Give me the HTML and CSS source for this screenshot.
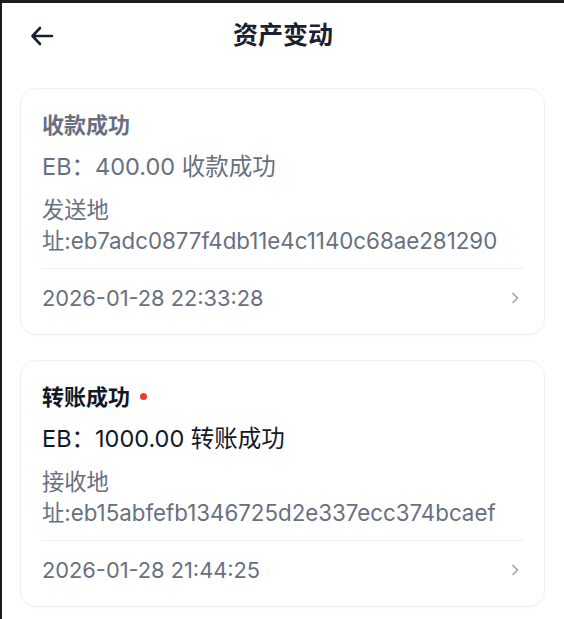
FILE: index.html
```html
<!DOCTYPE html>
<html lang="zh-CN">
<head>
<meta charset="utf-8">
<title>资产变动</title>
<link rel="stylesheet" href="styles.css">
</head>
<body>
<div class="screen">
  <header class="topbar">
    <button class="back" aria-label="返回">
      <svg width="24" height="20" viewBox="0 0 24 20" fill="none" stroke="#1a2030" stroke-width="2.6" stroke-linecap="round" stroke-linejoin="round"><path d="M22 10H3M10 2L2.5 10L10 18"/></svg>
    </button>
    <h1 class="title">资产变动</h1>
  </header>

  <main class="list">
    <article class="card read">
      <div class="card-title">收款成功</div>
      <div class="amount">EB：400.00 收款成功</div>
      <div class="address">发送地址:eb7adc0877f4db11e4c1140c68ae281290</div>
      <div class="divider"></div>
      <div class="foot">
        <span class="date">2026-01-28 22:33:28</span>
        <svg class="chev" width="8" height="12" viewBox="0 0 8 12" fill="none" stroke="#9ca3af" stroke-width="1.6" stroke-linecap="round" stroke-linejoin="round"><path d="M2 1.5L6.5 6L2 10.5"/></svg>
      </div>
    </article>

    <article class="card unread">
      <div class="card-title">转账成功<span class="dot"></span></div>
      <div class="amount">EB：1000.00 转账成功</div>
      <div class="address">接收地址:eb15abfefb1346725d2e337ecc374bcaef</div>
      <div class="divider"></div>
      <div class="foot">
        <span class="date">2026-01-28 21:44:25</span>
        <svg class="chev" width="8" height="12" viewBox="0 0 8 12" fill="none" stroke="#9ca3af" stroke-width="1.6" stroke-linecap="round" stroke-linejoin="round"><path d="M2 1.5L6.5 6L2 10.5"/></svg>
      </div>
    </article>
  </main>
</div>
</body>
</html>
```

FILE: styles.css
```css
* { box-sizing: border-box; }
html, body { margin: 0; padding: 0; background: #1c1c1e; }
body {
  font-family: "Inter", "Noto Sans CJK SC", sans-serif;
  width: 564px;
  height: 619px;
  overflow: hidden;
}
.screen {
  margin-top: 3px;
  margin-left: 2px;
  background: #ffffff;
  height: 616px;
  display: flex;
  flex-direction: column;
}
.topbar {
  height: 66px;
  display: flex;
  align-items: center;
  justify-content: center;
  position: relative;
}
.back {
  position: absolute;
  left: 28px;
  top: 23px;
  border: 0;
  background: none;
  padding: 0;
  width: 24px;
  height: 20px;
}
.back svg { display: block; }
.title {
  margin: 0 0 2px 0;
  font-size: 25px;
  font-weight: 700;
  color: #1a2030;
  line-height: 32px;
}
.list {
  padding: 19px 19px 0 18px;
  display: flex;
  flex-direction: column;
  gap: 25px;
}
.card {
  border: 1px solid #edf0f3;
  border-radius: 16px;
  padding: 22px 20px 22px 21px;
  box-shadow: 0 1px 3px rgba(0,0,0,0.03);
}
.card-title {
  font-size: 22px;
  font-weight: 700;
  line-height: 28px;
  display: flex;
  align-items: center;
}
.read .card-title { color: #687080; }
.unread .card-title { color: #111827; }
.dot {
  width: 7px;
  height: 7px;
  border-radius: 50%;
  background: #ef3b2d;
  margin-left: 10px;
  margin-top: -2px;
}
.amount {
  margin-top: 14px;
  font-size: 23.5px;
  line-height: 28px;
}
.read .amount { color: #687080; }
.unread .amount { color: #111827; }
.address {
  margin-top: 13px;
  font-size: 22.3px;
  line-height: 31px;
  color: #687080;
}
.divider {
  margin-top: 12px;
  height: 1px;
  background: #eef0f2;
}
.foot {
  margin-top: 15px;
  display: flex;
  align-items: center;
  justify-content: space-between;
  height: 28px;
}
.date {
  font-size: 21.8px;
  line-height: 28px;
  color: #687080;
}
.chev { display: block; margin-right: 5px; }
```
